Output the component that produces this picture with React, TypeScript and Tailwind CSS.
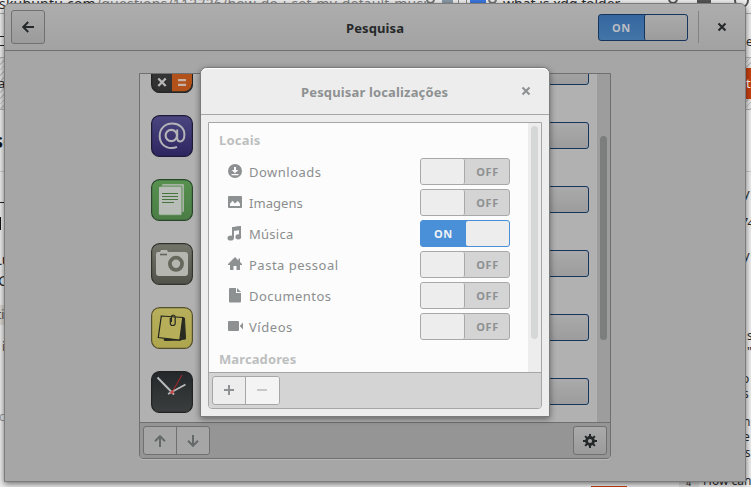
import React from "react";

const strip = "flex shrink-0 items-center whitespace-nowrap leading-none";
const hatch = "bg-[repeating-linear-gradient(135deg,#c4c4c4_0_1px,#e4e4e4_1px_4px)]";

/* Browser page lying behind the settings window; only its rim shows. */
function Backdrop() {
  return (
    <div className="flex h-[487px] flex-col overflow-hidden bg-[#eeeeee] text-[12px] text-[#2b2b2b]">
      <div className="-mt-[7px] flex h-[21px] shrink-0 items-start border-b border-[#aaa] leading-none">
        <span className="-ml-px w-[427px] shrink-0 whitespace-nowrap pt-[4px] text-[14px] tracking-[0.2px]">
          skubuntu.com<span className="text-[#808080]">/questions/113736/how-do-i-set-my-default-musi</span>
        </span>
        <span className="h-[11px] w-[9px] shrink-0 rounded-full border-2 border-[#777]" />
        <span className="ml-[7px] h-[11px] w-[11px] shrink-0 bg-[#8a9aa8]" />
        <span className="ml-[5px] h-[12px] w-[9px] shrink-0 border border-[#888]" />
        <span className="ml-[3px] h-[11px] w-4 shrink-0 bg-[#3b78e0]" />
        <span className="ml-[2px] h-[11px] w-[9px] shrink-0 rounded-full border-2 border-[#777]" />
        <span className="ml-[6px] w-[165px] shrink-0 whitespace-nowrap pt-[4px] text-[14px]">what is xdg folder</span>
        <span className="h-[11px] w-[10px] shrink-0 rounded-full border-2 border-[#555]" />
        <span className="ml-[19px] h-[11px] w-[14px] shrink-0 bg-[#555]" />
        <span className="ml-[23px] h-[15px] w-[15px] shrink-0 rounded-full border-2 border-[#555]" />
      </div>
      <div className="flex flex-1 justify-between">
        <div className="flex w-5 flex-col">
          <div className="mt-[22px] h-[9px] border-t border-[#222]" />
          <div className="h-[12px] border-t border-[#222]" />
          <div className={`${strip} ${hatch} h-[53px] border-y border-[#b4b4b4] text-[13px]`}>
            <span className="-ml-[2px]">a</span>
          </div>
          <div className={`${strip} h-[62px] border-b border-[#ccc] text-[20px] font-bold text-[#111]`}>
            <span className="-ml-[7px]">se</span>
          </div>
          <div className="mt-[30px] h-[15px] border-t border-[#222]" />
          <div className="h-[13px] w-px bg-[#111]" />
          <div className={`${strip} mt-[18px] h-[22px] text-[15px]`}><span className="-ml-[6px]">Lu</span></div>
          <div className={`${strip} h-[20px] text-[15px]`}><span className="-ml-[2px]">C</span></div>
          <div className={`${strip} mt-[15px] h-5 bg-[#ddd9d3] text-[#555]`}><span className="-ml-[3px]">ti</span></div>
          <div className={`${strip} mt-3 h-5 text-[#555]`}><span className="ml-[2px]">i</span></div>
          <div className={`${strip} mt-[50px] h-5 text-[#999]`}><span className="-ml-px">c</span></div>
        </div>
        <div className="flex w-[13px] flex-col">
          <div className={`${strip} mt-[13px] h-[30px] pl-[8px]`}>e</div>
          <div className={`${strip} ${hatch} h-[53px] border-y border-[#b4b4b4] pl-[6px]`}>
            <div className="flex h-[31px] w-[7px] items-center bg-[#c8400f] pl-[2px] text-[13px] text-white">t</div>
          </div>
          <div className="h-[62px] border-b border-[#ccc]" />
          <div className={`${strip} mt-[11px] h-5 pl-[5px] text-[13px]`}>y</div>
          <div className={`${strip} mt-[11px] h-[18px] pl-[3px] italic`}>74</div>
          <div className={`${strip} mt-[13px] h-5 pl-[5px] text-[13px]`}>y</div>
          <div className={`${strip} mt-[64px] h-[13px] pl-[9px]`}>s</div>
          <div className={`${strip} mt-[3px] h-[13px] pl-[9px]`}>"</div>
          <div className={`${strip} mt-[14px] h-[13px] pl-[4px]`}>o</div>
          <div className={`${strip} mt-[2px] h-[13px] pl-[5px]`}>s</div>
          <div className={`${strip} mt-[15px] h-[13px] pl-[5px]`}>n</div>
          <div className={`${strip} mt-[2px] h-[13px] pl-[5px]`}>e</div>
          <div className={`${strip} mt-[3px] h-[13px]`}>as</div>
        </div>
      </div>
      <div className="flex h-[13px] shrink-0 items-end leading-none">
        <div className="ml-[591px] h-px w-9 shrink-0 bg-[#c8400f]" />
        <div className="ml-[52px] h-[13px] w-5 shrink-0 bg-[#dcdcdc] pl-[7px] pt-[4px] text-[9px]">4</div>
        <div className="ml-[4px] whitespace-nowrap">How can</div>
      </div>
    </div>
  );
}

/* Desktop switch in its dimmed, switched-on state. */
function DimSwitch() {
  return (
    <div className="flex h-[27px] w-[90px] shrink-0 overflow-hidden rounded-[3px] border border-[#16355c] bg-linear-to-b from-[#35669f] to-[#4475a8]">
      <span className="flex w-[45px] items-center justify-center text-[11px] leading-none font-bold tracking-[0.6px] text-[#b9bdc2]">ON</span>
      <span className="flex-1 rounded-[2px] border-l border-[#16355c] bg-linear-to-b from-[#aaaaaa] to-[#9c9c9c]" />
    </div>
  );
}

function Switch({ on }: { on?: boolean }) {
  return on ? (
    <div className="flex h-[27px] w-[90px] rounded-[3px] border border-[#4a90d9] bg-[#4a90d9]">
      <span className="flex w-[45px] items-center justify-center text-[11px] leading-none font-bold tracking-[0.6px] text-[#f0f2f4]">ON</span>
      <span className="flex-1 rounded-[2px] bg-[#ededed]" />
    </div>
  ) : (
    <div className="flex h-[27px] w-[90px] rounded-[3px] border border-[#a8a8a8] bg-[#d4d4d4]">
      <span className="w-[44px] rounded-[2px] border-r border-[#a8a8a8] bg-[#ededed]" />
      <span className="flex flex-1 items-center justify-center pl-px text-[11px] leading-none font-bold tracking-[0.6px] text-[#8e9192]">OFF</span>
    </div>
  );
}

function Cross({ className }: { className: string }) {
  return (
    <svg viewBox="0 0 10 10" className={className}>
      <path d="M1.5 1.5 8.5 8.5M8.5 1.5 1.5 8.5" stroke="currentColor" strokeWidth="2.1" fill="none" />
    </svg>
  );
}

function Tile({ id, from, to, edge, children }: { id: string; from: string; to: string; edge: string; children: React.ReactNode }) {
  return (
    <svg viewBox="0 0 42 42" className="block h-[42px] w-[42px]">
      <defs>
        <linearGradient id={id} x1="0" y1="0" x2="0" y2="1">
          <stop offset="0" stopColor={from} />
          <stop offset="1" stopColor={to} />
        </linearGradient>
      </defs>
      <rect x=".6" y=".6" width="40.8" height="40.8" rx="8" fill={`url(#${id})`} stroke={edge} strokeWidth="1.2" />
      {children}
    </svg>
  );
}

const apps: React.ReactNode[] = [
  <Tile id="calc" from="#3a3a3a" to="#303030" edge="#222">
    <path d="M21 0h13a7 7 0 0 1 7 7v26a8 8 0 0 1-8 8H21z" fill="#b3511a" />
    <path d="M0 21h42" stroke="#222" />
    <path d="M7.3 27.500l7.400 7.500M14.700 27.500l-7.400 7.500" stroke="#b8b8b8" strokeWidth="2.300" />
    <path d="M27 29.200h8M27 33.800h8" stroke="#c4b4a8" strokeWidth="2.200" />
    <path d="M1.200 33a8 8 0 0 0 8 8h24a8 8 0 0 0 8-8" fill="none" stroke="#2a2a2a" strokeWidth="1.400" />
  </Tile>,
  <Tile id="mail" from="#4b4680" to="#2d2560" edge="#1d1a38">
    <circle cx="20.300" cy="20.500" r="5.700" fill="none" stroke="#b3b3b8" strokeWidth="2.200" />
    <path d="M26.200 14.500v8.700q.2 3.300 3.200 3.300 4-.5 4-7C33.400 12.500 28 8.600 21.300 8.600 13.500 8.600 8.700 14 8.700 21c0 7 4.500 12 11.800 12q3 0 5.500-1.200" fill="none" stroke="#b3b3b8" strokeWidth="2" />
  </Tile>,
  <Tile id="news" from="#57914f" to="#4b7d45" edge="#29452a">
    <rect x="11" y="5" width="22" height="28" rx="1" fill="#a6b3a4" />
    <rect x="7.500" y="7.200" width="23.400" height="29" rx="1.500" fill="#b9bdb8" stroke="#4d8547" strokeWidth=".8" />
    <path d="M11 14.500h16M11 17.500h16M11 20.500h16M11 23.500h12" stroke="#47743e" strokeWidth="1.200" />
  </Tile>,
  <Tile id="cam" from="#74756a" to="#515249" edge="#33332d">
    <path d="M7 9h2l1-2h6l1 2h17a3 3 0 0 1 3 3v18a3 3 0 0 1-3 3H8a3 3 0 0 1-3-3V11a2 2 0 0 1 2-2z" fill="#b6b6b1" />
    <path d="M9 11.500h7" stroke="#62635a" strokeWidth="1.600" />
    <circle cx="25" cy="20.800" r="6.100" fill="none" stroke="#66675d" strokeWidth="3.800" />
  </Tile>,
  <Tile id="notes" from="#b7af5c" to="#aea54e" edge="#55502c">
    <path d="M31 10.500l2.500.5 1 21-5 .5M13 32l18-1-.5 2-17 .5z" fill="#292a22" stroke="#292a22" />
    <path d="M10.300 9l21.500 1.500-3 22.500L7.300 30.500z" fill="#b6ae59" stroke="#25261f" strokeWidth="1.200" />
    <path d="M19.300 11v5.500q.2 2 2.400 2 2.300 0 2.500-2V10q-.2-2-2-2-1.800.2-1.800 2v5" fill="none" stroke="#292a22" strokeWidth="1.200" />
  </Tile>,
  <Tile id="clock" from="#24282a" to="#3b3e3e" edge="#222">
    <path d="M6.500 6.500L23 23.500" stroke="#bbb" strokeWidth="1.900" />
    <path d="M34.500 13.500L17 23" stroke="#bbb" strokeWidth="1.700" />
    <path d="M31 4L20.500 22" stroke="#b3262a" strokeWidth="1" />
    <circle cx="21" cy="21.300" r="1.700" fill="#c34a4a" />
  </Tile>,
];

const places: { name: string; on?: boolean; icon: React.ReactNode; track: string }[] = [
  {
    name: "Downloads",
    track: "tracking-[0.5px]",
    icon: (
      <>
        <circle cx="8" cy="7" r="7" />
        <path d="M8 3v4" stroke="#fcfcfc" strokeWidth="2" />
        <path d="M4.700 6h6.600L8 9.300zM4.500 10h7v1.200h-7z" fill="#fcfcfc" />
      </>
    ),
  },
  {
    name: "Imagens",
    track: "tracking-[0.05px]",
    icon: (
      <>
        <rect x="1" y="1" width="14" height="12" rx="1" />
        <path d="M3 11V8.700l2.500-3 2.500 2.800 1.500-1.500 1.500-1 2 2.800V11z" fill="#fcfcfc" />
      </>
    ),
  },
  {
    name: "Música",
    on: true,
    track: "tracking-[0.25px]",
    icon: (
      <>
        <path d="M5 1.200L14 0v10.500h-2V4l-5 .6V12H5z" />
        <path d="M5 1.200L14 0v4l-9 1z" />
        <ellipse cx="3.700" cy="12" rx="3.200" ry="2.600" />
        <ellipse cx="11.300" cy="10.800" rx="2.900" ry="2.600" />
      </>
    ),
  },
  {
    name: "Pasta pessoal",
    track: "tracking-[0.5px]",
    icon: <path d="M8 0L1 7v1h2v5h3.500V9h3v4H13V8h2V7l-2-2V1.500h-1.500v2z" />,
  },
  {
    name: "Documentos",
    track: "tracking-[0.45px]",
    icon: <path d="M3 0h6v5h5v8.500a1 1 0 0 1-1 1H3a1 1 0 0 1-1-1V1a1 1 0 0 1 1-1zM10 0l4 4h-4z" />,
  },
  {
    name: "Vídeos",
    track: "tracking-[0.55px]",
    icon: <path d="M2 2h9a1 1 0 0 1 1 1v8a1 1 0 0 1-1 1H2a1 1 0 0 1-1-1V3a1 1 0 0 1 1-1zM12.800 7L16 3.600v6.800z" />,
  },
];

function SettingsWindow() {
  return (
    <div className="absolute left-[4px] top-[3px] flex h-[479px] w-[742px] flex-col overflow-hidden rounded-t-[6px] border border-[#7c7c7c] bg-[#a6a6a6] shadow-[0_2px_6px_rgba(0,0,0,0.55)]">
      <header className="flex h-[47px] shrink-0 items-center border-b border-[#6f6f6f] bg-linear-to-b from-[#adadad] to-[#a2a2a2] pl-[6px] pr-[18px]">
        <button className="flex h-[34px] w-[34px] items-center justify-center rounded-[3px] border border-[#707070] bg-linear-to-b from-[#a9a9a9] to-[#9b9b9b]">
          <svg viewBox="0 0 14 14" className="h-[14px] w-[14px] text-[#25292a]">
            <path d="M13 7H2.500M7.200 2L2.200 7l5 5" fill="none" stroke="currentColor" strokeWidth="2" />
          </svg>
        </button>
        <h1 className="flex-1 pl-[301px] pt-[3px] text-[13px] font-bold tracking-[0.1px] text-[#25292a]">Pesquisa</h1>
        <DimSwitch />
        <div className="ml-[10px] h-[32px] w-px bg-[#828282]" />
        <Cross className="ml-[18px] h-[10px] w-[10px] text-[#25292a]" />
      </header>

      <main className="ml-[134px] mt-[22px] flex h-[386px] w-[472px] flex-col overflow-hidden rounded-b-[4px] border border-[#6f6f6f] bg-[#b1b1b1] shadow-[0_1px_0_#b6b6b6]">
        <div className="flex h-[348px] shrink-0 overflow-hidden">
          <ul className="-mt-[34px] flex-1 pl-[11px] pr-[8px]">
            {apps.map((icon, i) => (
              <li key={i} className="flex h-16 items-start justify-between pt-[11px]">
                {icon}
                <div className="pt-[7px]">
                  <DimSwitch />
                </div>
              </li>
            ))}
          </ul>
          <div className="w-[13px] bg-[#9d9d9d] pl-[3px] pt-[62px]">
            <div className="h-[204px] w-[7px] rounded-full bg-[#7b7e7d]" />
          </div>
        </div>
        <footer className="flex flex-1 items-start justify-between border-t border-[#6f6f6f] bg-[#959595] px-[3px] pt-[3px]">
          <div className="flex h-[29px] w-[67px] rounded-[3px] border border-[#707070] bg-[#a6a6a6] text-[#656969]">
            <span className="flex w-[33px] items-center justify-center border-r border-[#707070]">
              <svg viewBox="0 0 14 14" className="h-[14px] w-[14px]">
                <path d="M7 13V2.500M2 7.200l5-5 5 5" fill="none" stroke="currentColor" strokeWidth="2" />
              </svg>
            </span>
            <span className="flex flex-1 items-center justify-center">
              <svg viewBox="0 0 14 14" className="h-[14px] w-[14px]">
                <path d="M7 1v10.500M2 6.800l5 5 5-5" fill="none" stroke="currentColor" strokeWidth="2" />
              </svg>
            </span>
          </div>
          <div className="flex h-[29px] w-[34px] items-center justify-center rounded-[3px] border border-[#707070] bg-linear-to-b from-[#aaaaaa] to-[#9b9b9b]">
            <svg viewBox="-7 -7 14 14" className="h-[14px] w-[14px] text-[#25292a]" stroke="currentColor" fill="none">
              <circle r="3.500" strokeWidth="2.800" />
              <path d="M0-7v3M0 7V4M-7 0h3M7 0H4M-4.900-4.900l2 2M4.900 4.900l-2-2M-4.900 4.900l2-2M4.900-4.900l-2 2" strokeWidth="2" />
            </svg>
          </div>
        </footer>
      </main>
    </div>
  );
}

function LocationsDialog() {
  return (
    <div className="absolute left-[200px] top-[67px] flex h-[350px] w-[350px] flex-col rounded-t-[7px] border border-[#7b7b7b] bg-[#ededed] shadow-[0_2px_6px_rgba(0,0,0,0.45)]">
      <header className="flex h-[47px] shrink-0 items-center justify-between rounded-t-[6px] border-b border-[#a6a6a6] pl-[100px] pr-[18px] shadow-[inset_0_1px_0_#ffffff]">
        <h2 className="whitespace-nowrap pt-[3px] text-[13px] font-bold tracking-[0.15px] text-[#8e9192]">Pesquisar localizações</h2>
        <Cross className="h-[10px] w-[10px] text-[#8e9192]" />
      </header>
      <section className="ml-[7px] mt-[7px] flex h-[287px] w-[334px] flex-col overflow-hidden rounded-b-[4px] border border-[#a6a6a6] bg-[#fcfcfc]">
        <div className="flex h-[249px] shrink-0">
          <div className="flex-1 pl-[10px] pr-[18px]">
            <h3 className="flex h-[33px] items-center pt-[3px] text-[13px] font-bold tracking-[0.2px] text-[#bdbfbf]">Locais</h3>
            <ul>
              {places.map((p) => (
                <li key={p.name} className="flex h-[31px] items-center">
                  <svg viewBox="0 0 16 15" className="ml-[8px] h-[15px] w-[16px] fill-[#8e9192] text-[#8e9192]">
                    {p.icon}
                  </svg>
                  <span className={`ml-[6px] flex-1 whitespace-nowrap pt-[2px] text-[13px] text-[#8b8e8f] ${p.track}`}>{p.name}</span>
                  <Switch on={p.on} />
                </li>
              ))}
            </ul>
            <h3 className="flex h-[30px] items-center pt-[6px] text-[13px] font-bold tracking-[0.1px] text-[#bdbfbf]">Marcadores</h3>
          </div>
          <div className="w-[13px] bg-[#ededed] pl-[3px] pt-[3px]">
            <div className="h-[213px] w-[7px] rounded-full bg-[#d6d8d7]" />
          </div>
        </div>
        <footer className="flex-1 border-t border-[#a6a6a6] bg-[#d4d4d4] pl-[3px] pt-[3px]">
          <div className="flex h-[29px] w-[68px] overflow-hidden rounded-[3px] border border-[#a6a6a6] bg-[#ededed]">
            <span className="flex w-[33px] items-center justify-center border-r border-[#a6a6a6] pb-px text-[#8e9192]">
              <svg viewBox="0 0 10 10" className="h-[10px] w-[10px]">
                <path d="M5 0v10M0 5h10" stroke="currentColor" strokeWidth="2" />
              </svg>
            </span>
            <span className="flex flex-1 items-center justify-center bg-[#f4f4f4] pr-px pb-px text-[#c6c7c7]">
              <svg viewBox="0 0 10 10" className="h-[10px] w-[10px]">
                <path d="M0 5h10" stroke="currentColor" strokeWidth="2" />
              </svg>
            </span>
          </div>
        </footer>
      </section>
    </div>
  );
}

export default function App() {
  return (
    <div className="relative h-[487px] w-[751px] overflow-hidden font-['Noto_Sans','Open_Sans',sans-serif]">
      <Backdrop />
      <SettingsWindow />
      <LocationsDialog />
    </div>
  );
}
